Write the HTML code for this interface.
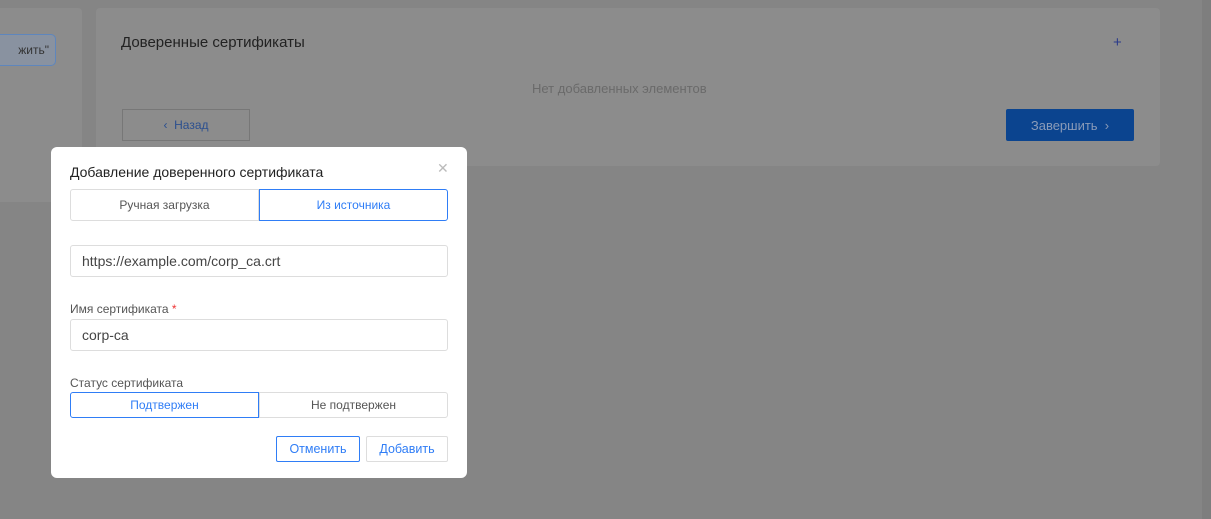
<!DOCTYPE html>
<html><head><meta charset="utf-8"><style>
*{box-sizing:border-box;margin:0;padding:0}
body{width:1211px;height:519px;background:#858585;font-family:"Liberation Sans",sans-serif;position:relative;overflow:hidden}
.abs{position:absolute}
.card{background:#8c8c8c;border-radius:4px}
.dlg{left:51px;top:147px;width:416px;height:331px;background:#fff;border-radius:6px}
.seg{position:absolute;display:flex;font-size:12px}
.seg div{flex:1;display:flex;align-items:center;justify-content:center;border:1px solid #ddd;color:#555}
.seg .on{border-color:#2f7df6;color:#2f7df6}
.inp{position:absolute;left:19px;width:378px;height:32px;border:1px solid #ddd;border-radius:3px;font-size:14px;color:#444;padding-left:11px;line-height:30px}
.lbl{position:absolute;left:19px;font-size:12px;color:#555}
.btn{position:absolute;height:26px;border:1px solid #ddd;border-radius:2px;font-size:12.5px;display:flex;align-items:center;justify-content:center;color:#2f7df6}
</style></head><body>
<div class="abs" style="left:1202px;top:0;width:9px;height:519px;background:#7e7e7e"></div>
<div class="abs card" style="left:-5px;top:8px;width:87px;height:194px"></div>
<div class="abs" style="left:-10px;top:34px;width:66px;height:32px;border:1px solid #5e86bd;border-radius:5px;background:#8992a0;font-size:12px;color:#333;line-height:30px;text-align:right;padding-right:6px">жить"</div>
<div class="abs card" style="left:96px;top:8px;width:1064px;height:158px"></div>
<div class="abs" style="left:121px;top:34px;font-size:15px;color:#222">Доверенные сертификаты</div>
<div class="abs" style="left:1113px;top:34px;font-size:15px;color:#2a3a8a">+</div>
<div class="abs" style="left:532px;top:81px;font-size:13px;color:#6a6a6a">Нет добавленных элементов</div>
<div class="abs" style="left:122px;top:109px;width:128px;height:32px;border:1px solid #777;font-size:12px;color:#2b4f8f;display:flex;align-items:center;justify-content:center">&lsaquo;&nbsp;&nbsp;Назад</div>
<div class="abs" style="left:1006px;top:109px;width:128px;height:32px;background:#0b448f;border-radius:2px;font-size:13px;color:#8a9bb8;display:flex;align-items:center;justify-content:center">Завершить&nbsp;&nbsp;&rsaquo;</div>

<div class="abs dlg">
<div class="abs" style="left:19px;top:17px;font-size:14px;color:#222">Добавление доверенного сертификата</div>
<div class="abs" style="left:386px;top:13px;font-size:14px;color:#bbb">✕</div>
<div class="seg" style="left:19px;top:42px;width:378px;height:32px"><div style="border-radius:3px 0 0 3px">Ручная загрузка</div><div class="on" style="border-radius:0 3px 3px 0">Из источника</div></div>
<div class="inp" style="top:98px">https://example.com/corp_ca.crt</div>
<div class="lbl" style="top:155px">Имя сертификата <span style="color:#e33">*</span></div>
<div class="inp" style="top:172px">corp-ca</div>
<div class="lbl" style="top:229px">Статус сертификата</div>
<div class="seg" style="left:19px;top:245px;width:378px;height:26px"><div class="on" style="border-radius:3px 0 0 3px">Подтвержен</div><div style="border-radius:0 3px 3px 0">Не подтвержен</div></div>
<div class="btn" style="left:225px;top:289px;width:84px;border-color:#2f7df6">Отменить</div>
<div class="btn" style="left:315px;top:289px;width:82px">Добавить</div>
</div>
</body></html>
